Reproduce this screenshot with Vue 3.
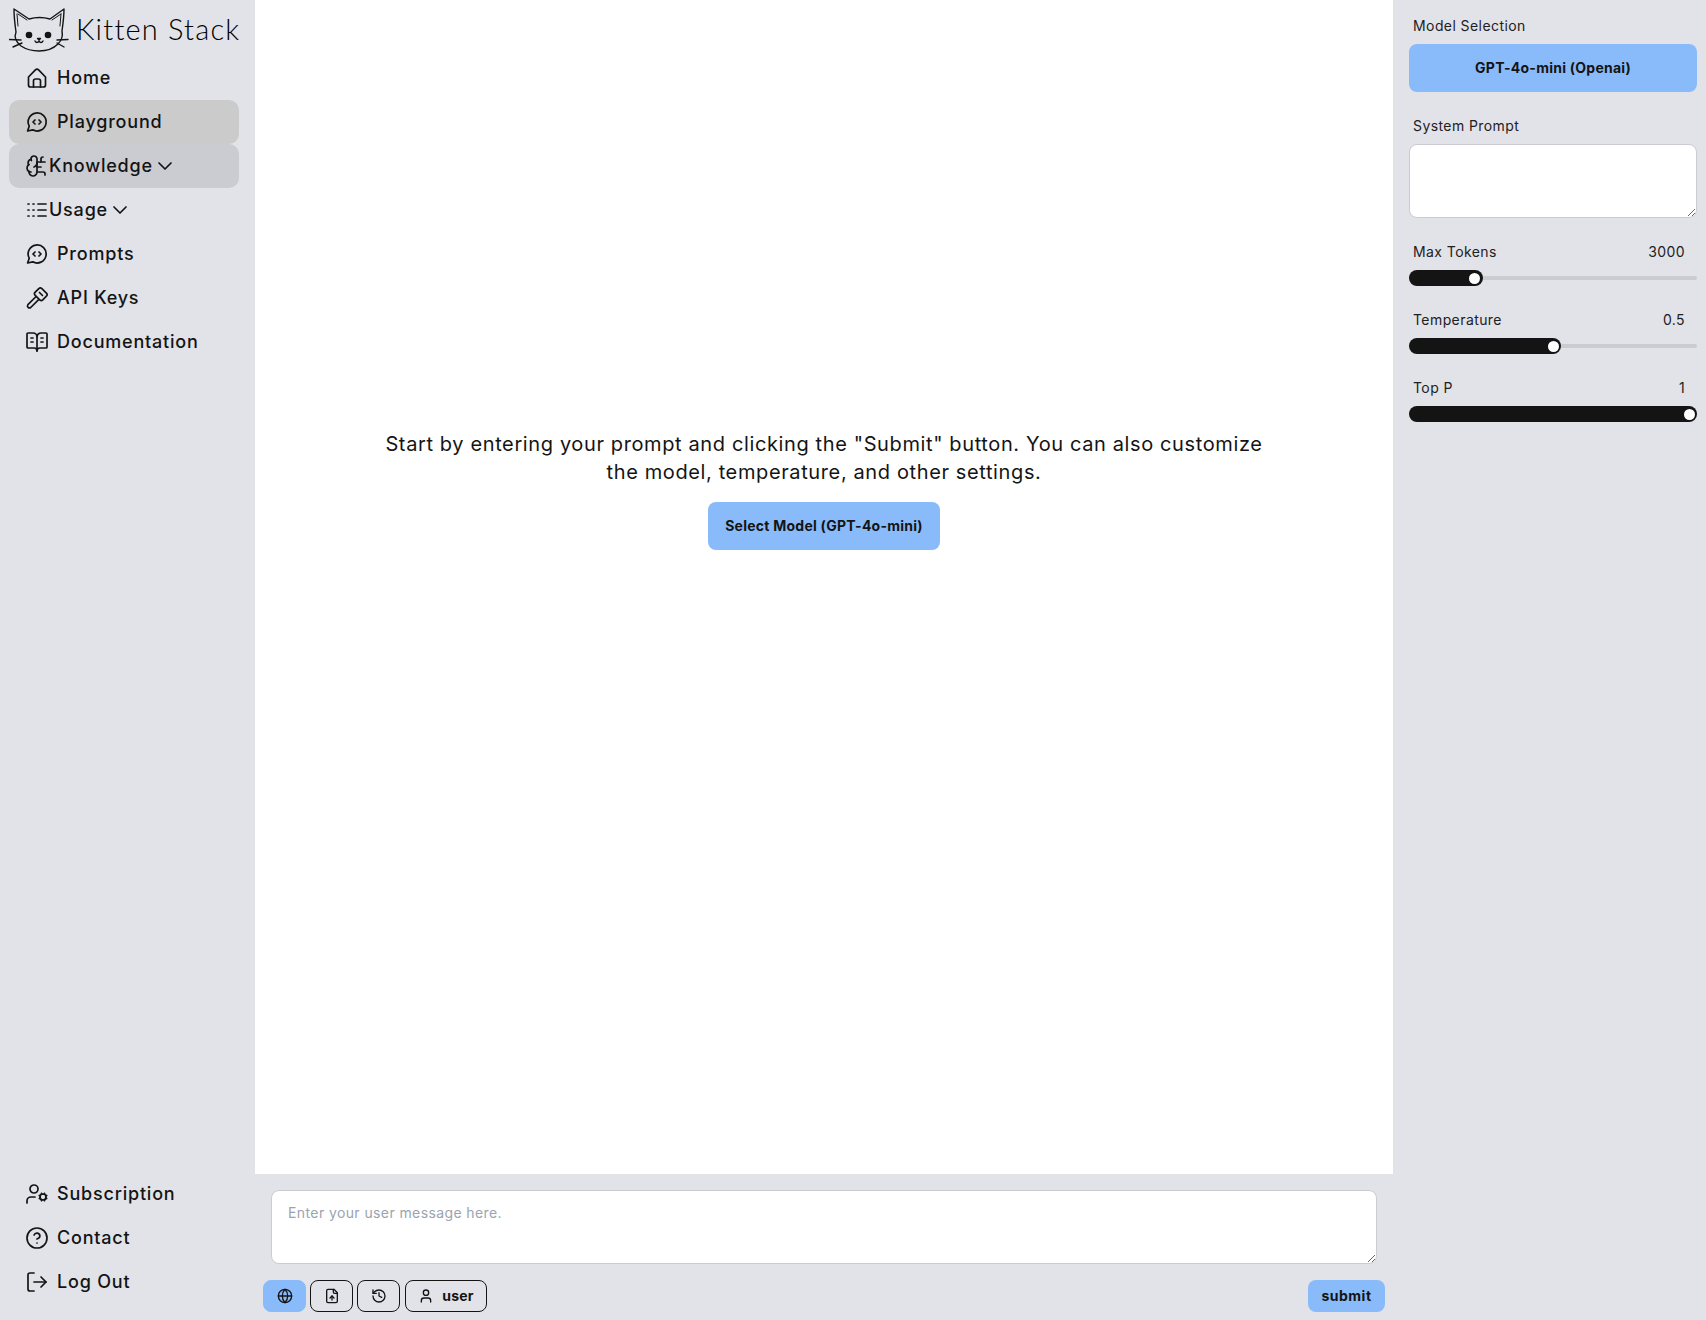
<script setup>
const brain = ['M12 5a3 3 0 1 0-5.997.125 4 4 0 0 0-2.526 5.77 4 4 0 0 0 .556 6.588A4 4 0 1 0 12 18Z','M9 13a4.5 4.5 0 0 0 3-4','M6.003 5.125A3 3 0 0 0 6.401 6.5','M3.477 10.896a4 4 0 0 1 .585-.396','M6 18a4 4 0 0 1-1.967-.516','M12 13h4','M12 18h6a2 2 0 0 1 2 2v1','M12 8h8','M16 8V5a2 2 0 0 1 2-2']
const logs = ['M13 12h8','M13 18h8','M13 6h8','M3 12h1','M3 18h1','M3 6h1','M8 12h1','M8 18h1','M8 6h1']
const chat = ['M2.6 21l1.6-4.8A9 9 0 1 1 7.7 19.8L2.6 21Z','M10 10l-2 2 2 2','M14 10l2 2-2 2']
const top = [
  { label: 'Home', d: ['M3.5 11 10.4 3.8a2.3 2.3 0 0 1 3.2 0L20.5 11V19a2 2 0 0 1-2 2H5.5a2 2 0 0 1-2-2Z','M8.5 21v-6a2 2 0 0 1 2-2h3a2 2 0 0 1 2 2v6'] },
  { label: 'Playground', d: chat, cls: 'on' },
  { label: 'Knowledge', d: brain, cls: 'open', chev: true },
  { label: 'Usage', d: logs, chev: true },
  { label: 'Prompts', d: chat },
  { label: 'API Keys', d: ['M13.8 2.6a2.2 2.2 0 0 1 3.1 0l4.5 4.5a2.2 2.2 0 0 1 0 3.1l-3.6 3.6a2.2 2.2 0 0 1-3.1 0L10.2 9.3a2.2 2.2 0 0 1 0-3.1Z','M14.5 6.5l3 3','M10.6 11 2.9 18.7a2 2 0 0 0 2.8 2.8l7.7-7.7'] },
  { label: 'Documentation', d: ['M12 7v14','M16 12h2','M16 8h2','M3 18a1 1 0 0 1-1-1V4a1 1 0 0 1 1-1h5a4 4 0 0 1 4 4 4 4 0 0 1 4-4h5a1 1 0 0 1 1 1v13a1 1 0 0 1-1 1h-6a3 3 0 0 0-3 3 3 3 0 0 0-3-3Z','M6 12h2','M6 8h2'] }
]
const bottom = [
  { label: 'Subscription', d: ['M10 15H6a4 4 0 0 0-4 4v2','m14.305 16.53.923-.382','m15.228 13.852-.923-.383','m16.852 12.228-.383-.923','m16.852 17.772-.383.924','m19.148 12.228.383-.923','m19.53 18.696-.382-.924','m20.772 13.852.924-.383','m20.772 16.148.924.383'], circles: [[9,7,4],[18,15,3]] },
  { label: 'Contact', d: ['M9.1 9a3 3 0 0 1 5.8 1c0 2-3 3-3 3','M12 17h.01'], circles: [[12,12,10]] },
  { label: 'Log Out', d: ['M9 21H5a2 2 0 0 1-2-2V5a2 2 0 0 1 2-2h4','M16 17l5-5-5-5','M21 12H9'] }
]
const sliders = [
  { label: 'Max Tokens', value: '3000', f: 0.213 },
  { label: 'Temperature', value: '0.5', f: 0.5 },
  { label: 'Top P', value: '1', f: 1 }
]
const W = 288, T = 16
const fillW = f => (T + f * (W - T)) + 'px'
const tools = [
  { cls: 'blue', d: ['M2 12h20','M12 2a14.5 14.5 0 0 0 0 20 14.5 14.5 0 0 0 0-20'], circles: [[12,12,10]] },
  { d: ['M15 2H6a2 2 0 0 0-2 2v16a2 2 0 0 0 2 2h12a2 2 0 0 0 2-2V7Z','M14 2v4a2 2 0 0 0 2 2h4','M12 12v6','M15 15l-3-3-3 3'] },
  { d: ['M3 12a9 9 0 1 0 9-9 9.75 9.75 0 0 0-6.74 2.74L3 8','M3 3v5h5','M12 7v5l4 2'] }
]
</script>

<template>
  <div class="app">
    <aside class="side">
      <div>
        <div class="brand">
          <svg class="cat" viewBox="9 7 60 46" width="60" height="46" fill="none" stroke="#141414" stroke-width="1.4" stroke-linecap="round" stroke-linejoin="round">
            <path d="M14 9C14 15 15 25 16 32C14 37 16 42 21 46C27 50 33 51 39 51C46 51 53 49 58 44C62 40 63 36 62 31C63 24 64 15 64 9L50 19C43 17 36 17 29 19Z"/>
            <path d="M17 14L18 26M18 14L27 20M61 14L60 26M61 14L52 20" stroke-width="1"/>
            <circle cx="29" cy="35" r="3.3" fill="#141414" stroke="none"/>
            <circle cx="48" cy="35" r="3.3" fill="#141414" stroke="none"/>
            <path d="M37.5 38.5h3l-1.5 1.5Z" fill="#141414"/>
            <path d="M35 41c1 2 3 2 4 0c1 2 3 2 4 0"/>
            <path d="M9 39.5L21 40M13 47L22 43M57 40L68 39.5M57 43L64 47"/>
          </svg>
          <span class="brand-name">Kitten Stack</span>
        </div>
        <nav>
          <div v-for="n in top" :key="n.label" class="item" :class="[n.cls, { tight: n.chev }]">
            <svg class="ico" viewBox="0 0 24 24"><path v-for="p in n.d" :key="p" :d="p"/></svg>
            <span>{{ n.label }}</span>
            <svg v-if="n.chev" class="chev" viewBox="0 0 24 24"><path d="M6 9l6 6 6-6"/></svg>
          </div>
        </nav>
      </div>
      <nav class="foot">
        <div v-for="n in bottom" :key="n.label" class="item">
          <svg class="ico" viewBox="0 0 24 24">
            <circle v-for="c in n.circles" :key="c[0] + '-' + c[1]" :cx="c[0]" :cy="c[1]" :r="c[2]"/>
            <path v-for="p in n.d" :key="p" :d="p"/>
          </svg>
          <span>{{ n.label }}</span>
        </div>
      </nav>
    </aside>

    <main class="main">
      <section class="canvas">
        <p class="hint">Start by entering your prompt and clicking the "Submit" button. You can also customize the model, temperature, and other settings.</p>
        <button class="btn select">Select Model (GPT-4o-mini)</button>
      </section>
      <section class="composer">
        <textarea class="msg" placeholder="Enter your user message here."></textarea>
        <div class="actions">
          <div class="tools">
            <button v-for="(t, i) in tools" :key="i" class="tool" :class="t.cls">
              <svg class="ico16" viewBox="0 0 24 24">
                <circle v-for="c in t.circles" :key="c[2]" :cx="c[0]" :cy="c[1]" :r="c[2]"/>
                <path v-for="p in t.d" :key="p" :d="p"/>
              </svg>
            </button>
            <button class="tool user">
              <svg class="ico16" viewBox="0 0 24 24"><path d="M19 21v-2a4 4 0 0 0-4-4H9a4 4 0 0 0-4 4v2"/><circle cx="12" cy="7" r="4"/></svg>
              <span>user</span>
            </button>
          </div>
          <button class="btn submit">submit</button>
        </div>
      </section>
    </main>

    <aside class="panel">
      <div class="group">
        <label class="lab">Model Selection</label>
        <button class="btn model">GPT-4o-mini (Openai)</button>
      </div>
      <div class="group">
        <label class="lab">System Prompt</label>
        <textarea class="sys"></textarea>
      </div>
      <div v-for="s in sliders" :key="s.label" class="group">
        <div class="row"><label class="lab">{{ s.label }}</label><span class="val">{{ s.value }}</span></div>
        <div class="slider">
          <div class="track"></div>
          <div class="fill" :style="{ width: fillW(s.f) }"><i class="thumb"></i></div>
        </div>
      </div>
    </aside>
  </div>
</template>

<style scoped>
.app { display: flex; width: 1706px; height: 1320px; background: #e1e3e8; color: #141414; font-family: Inter, "Noto Sans", sans-serif; overflow: hidden; }
.side { width: 255px; flex: none; display: flex; flex-direction: column; justify-content: space-between; padding-bottom: 16px; box-sizing: border-box; }
.brand { height: 56px; display: flex; align-items: flex-start; padding: 7px 0 0 9px; box-sizing: border-box; }
.cat { flex: none; }
.brand-name { margin: 5px 0 0 7px; font-family: Lato, sans-serif; font-weight: 300; font-size: 29px; line-height: 34px; letter-spacing: 1.2px; white-space: nowrap; color: #000; }
.item { width: 230px; height: 44px; margin-left: 9px; padding-left: 16px; display: flex; align-items: center; gap: 8px; box-sizing: border-box; border-radius: 10px; font-size: 18px; font-weight: 500; letter-spacing: .8px; white-space: nowrap; }
.item span { margin-top: -2px; }
.item.tight { gap: 0; }
.item.on { background: #cbcbcb; }
.item.open { background: #cbccd2; }
.ico { width: 24px; height: 24px; flex: none; fill: none; stroke: #141414; stroke-width: 1.7; stroke-linecap: round; stroke-linejoin: round; }
.chev { width: 24px; height: 24px; flex: none; fill: none; stroke: #141414; stroke-width: 1.7; stroke-linecap: round; stroke-linejoin: round; }
.main { flex: 1; min-width: 0; display: flex; flex-direction: column; }
.canvas { flex: 1; background: #fff; display: flex; flex-direction: column; align-items: center; justify-content: center; gap: 16px; padding-bottom: 194px; }
.hint { margin: 0; width: 896px; font-size: 20px; line-height: 28px; text-align: center; letter-spacing: .62px; }
.btn { border: 0; background: #89bbfa; color: #141414; font-family: inherit; font-size: 14px; font-weight: 700; border-radius: 8px; padding: 0 0 2px; letter-spacing: .25px; }
.select { width: 232px; height: 48px; }
.composer { height: 146px; flex: none; padding: 16px 8px 8px; box-sizing: border-box; display: flex; flex-direction: column; gap: 16px; }
textarea { display: block; box-sizing: border-box; background: #fff; border: 1px solid #cbccd2; border-radius: 8px; outline: 0; font-family: inherit; }
.msg { margin: 0 8px; width: 1106px; height: 74px; padding: 12px 16px; font-size: 14px; letter-spacing: .4px; line-height: 20px; }
.msg::placeholder { color: #9ca3af; opacity: 1; }
.actions { display: flex; justify-content: space-between; height: 32px; }
.tools { display: flex; gap: 4px; }
.tool { width: 43px; height: 32px; padding: 0; box-sizing: border-box; background: transparent; border: 1px solid #141414; border-radius: 8px; display: flex; align-items: center; justify-content: center; color: #141414; font-family: inherit; font-size: 14px; font-weight: 700; letter-spacing: .25px; }
.tool.blue { background: #89bbfa; border-color: #89bbfa; }
.tool.user { width: 82px; margin-left: 1px; gap: 8px; }
.tool.user span { margin-top: -2px; }
.ico16 { width: 16px; height: 16px; flex: none; fill: none; stroke: #141414; stroke-width: 2; stroke-linecap: round; stroke-linejoin: round; }
.submit { width: 77px; height: 32px; letter-spacing: .5px; }
.panel { width: 313px; flex: none; padding: 16px 9px 0 16px; box-sizing: border-box; display: flex; flex-direction: column; gap: 24px; }
.group { display: flex; flex-direction: column; gap: 8px; }
.lab { display: block; padding-left: 4px; font-size: 14px; line-height: 20px; letter-spacing: .42px; color: #1f2023; }
.row { display: flex; justify-content: space-between; padding-right: 12px; }
.val { font-size: 14px; line-height: 20px; letter-spacing: .42px; color: #1f2023; }
.model { width: 288px; height: 48px; }
.sys { width: 288px; height: 74px; }
.slider { position: relative; width: 288px; height: 16px; }
.track { position: absolute; left: 0; right: 0; top: 6px; height: 4px; border-radius: 2px; background: #cbccd2; }
.fill { position: absolute; left: 0; top: 0; height: 16px; background: #141414; border-radius: 8px; }
.thumb { position: absolute; right: 2.5px; top: 2.5px; width: 11px; height: 11px; border-radius: 50%; background: #fff; }
</style>
